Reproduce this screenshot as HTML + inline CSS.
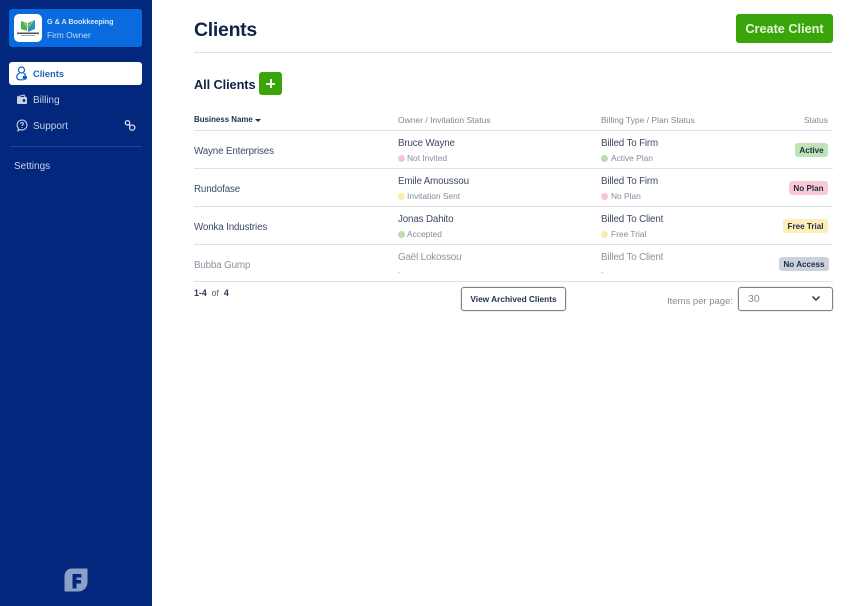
<!DOCTYPE html>
<html><head><meta charset="utf-8"><style>
html,body{margin:0;padding:0;background:#fff}
body{width:852px;height:606px;overflow:hidden;position:relative;font-family:"Liberation Sans",sans-serif;color:#3d4a66}
#w{position:absolute;left:0;top:0;width:852px;height:606px;filter:blur(.3px)}
.a{position:absolute;white-space:nowrap;line-height:14px}
.side{position:absolute;left:0;top:0;width:152px;height:606px;background:#02277c}
.hr{position:absolute;height:1px;background:#e0e2e5}
.p{font-size:9.8px;letter-spacing:-.15px;color:#3d4a66}
.s{font-size:8.4px;color:#858c9b}
.h{font-size:8.5px;color:#7f8695}
.d{position:absolute;width:7px;height:7px;border-radius:50%}
.b{position:absolute;height:14px;line-height:15px;border-radius:3px;font-size:8.1px;font-weight:bold;color:#1d2b4d;text-align:center}
.n{font-size:10px;color:#c9d3e8}
.o{position:absolute;border:1px solid #7b828f;box-shadow:0 0 1px #7b828f;border-radius:3px}
</style></head><body><div id="w">
<div class="side"></div>
<div style="position:absolute;left:9px;top:9px;width:133px;height:38px;background:#0a6bde;border-radius:3px"></div>
<div style="position:absolute;left:14px;top:14px;width:28px;height:28px;background:#fff;border-radius:5px"></div>
<svg style="position:absolute;left:14px;top:14px" width="28" height="28" viewBox="0 0 28 28"><path d="M7 7l6 2v8l-6-2z" fill="#4faf5a"/><path d="M14 9l7-3v9l-7 3z" fill="#2e8fc9"/><path d="M10 9l4 4 5-6" fill="none" stroke="#9ad04a" stroke-width="1.6"/><rect x="3" y="18.5" width="22" height="1.6" fill="#555"/><rect x="7" y="21" width="14" height="1" fill="#aaa"/></svg>
<div class="a" style="left:47px;top:15px;font-size:7.2px;font-weight:bold;color:#d5e5fb">G &amp; A Bookkeeping</div>
<div class="a" style="left:47px;top:28px;font-size:8.4px;color:#c5dcf8">Firm Owner</div>

<div style="position:absolute;left:9px;top:62px;width:133px;height:23px;background:#fff;border-radius:3px"></div>
<svg style="position:absolute;left:15px;top:66px" width="14" height="15" viewBox="0 0 14 15" fill="none" stroke="#0a5cc4" stroke-width="1.2"><circle cx="6.5" cy="4" r="3"/><path d="M4.500 7.200C2.500 8 1.800 9.500 1.800 11c0 1.800 1.200 2.800 3 2.800h3.600"/><path d="M8.500 7.200c1 .4 1.700 1 2.200 1.900"/><circle cx="9.800" cy="11.600" r="2.200" fill="#0a5cc4" stroke="none"/></svg>
<div class="a" style="left:33px;top:67px;font-size:9.3px;font-weight:bold;color:#1d63b8">Clients</div>

<svg style="position:absolute;left:16px;top:94px" width="12" height="11" viewBox="0 0 12 11" fill="none"><path d="M1 3l7-2 1 2" stroke="#c9d3e8" stroke-width="1.1"/><rect x="1" y="3" width="10" height="7" rx="1" fill="#c9d3e8"/><circle cx="8" cy="6.500" r="1.400" fill="#02277c"/></svg>
<div class="a n" style="left:33px;top:94px">Billing</div>

<svg style="position:absolute;left:16px;top:119px" width="12" height="13" viewBox="0 0 12 13" fill="none" stroke="#c9d3e8" stroke-width="1.1"><path d="M6 1a5 5 0 1 1-2.200 9.500L2 11.800l.4-2.500A5 5 0 0 1 6 1z"/><path d="M4.600 4.800c0-.8.6-1.300 1.400-1.300s1.400.5 1.400 1.200c0 1.100-1.400 1.100-1.400 2.200"/><path d="M6 8v.8"/></svg>
<div class="a n" style="left:33px;top:120px">Support</div>
<svg style="position:absolute;left:124px;top:119px" width="12" height="13" viewBox="0 0 12 13" fill="none" stroke="#d5dcec" stroke-width="1.3"><circle cx="3.500" cy="3.800" r="2.200"/><circle cx="8.200" cy="8.600" r="2.600"/><path d="M5 5.500l1.500 1.500"/></svg>
<div style="position:absolute;left:10px;top:146px;width:132px;height:1px;background:#1f4490"></div>
<div class="a n" style="left:14px;top:160px">Settings</div>

<svg style="position:absolute;left:64px;top:568px" width="24" height="24" viewBox="0 0 24 24"><path d="M8 .5h15.500V14c0 5.500-4 9.500-9.500 9.500H.5V8C.5 3.800 3.800.5 8 .5z" fill="#8ba0c9"/><path d="M8.500 6h9v3.500H12.500v2.500h4.500v3.500h-4.500v5h-4z" fill="#02277c"/></svg>

<div class="a" style="left:194px;top:18px;line-height:24px;font-size:19.5px;font-weight:bold;color:#10244a;letter-spacing:-.3px">Clients</div>
<div style="position:absolute;left:736px;top:14px;width:97px;height:29px;background:#3aa50a;border-radius:3px;color:#e6f5de;font-weight:bold;font-size:12.7px;line-height:30px;text-align:center">Create Client</div>
<div class="hr" style="left:194px;top:52px;width:639px"></div>

<div class="a" style="left:194px;top:76px;line-height:17px;font-size:12.8px;font-weight:bold;color:#10244a;letter-spacing:-.1px">All Clients</div>
<div style="position:absolute;left:259px;top:72px;width:23px;height:23px;background:#3aa50a;border-radius:3px"></div>
<div style="position:absolute;left:266px;top:82.500px;width:9px;height:2px;background:#eaf6e2"></div>
<div style="position:absolute;left:269.500px;top:79px;width:2px;height:9px;background:#eaf6e2"></div>

<div class="a" style="left:194px;top:113px;font-size:7.9px;font-weight:bold;color:#1d2f55">Business Name</div>
<div style="position:absolute;left:255px;top:119px;width:0;height:0;border:3px solid transparent;border-top:3px solid #1d2f55;border-bottom:0"></div>
<div class="a h" style="left:398px;top:113px">Owner / Invitation Status</div>
<div class="a h" style="left:601px;top:113px">Billing Type / Plan Status</div>
<div class="a h" style="right:24px;top:113px">Status</div>
<div class="hr" style="left:194px;top:130px;width:639px"></div>

<div class="a p" style="left:194px;top:145px">Wayne Enterprises</div>
<div class="a p" style="left:398px;top:137px">Bruce Wayne</div>
<div class="d" style="left:398px;top:155px;background:#f6c4d2"></div>
<div class="a s" style="left:407px;top:151px">Not Invited</div>
<div class="a p" style="left:601px;top:137px">Billed To Firm</div>
<div class="d" style="left:601px;top:155px;background:#bfdcab"></div>
<div class="a s" style="left:611px;top:151px">Active Plan</div>
<div class="b" style="left:795px;top:143px;width:33px;background:#bfe3b4">Active</div>
<div class="hr" style="left:194px;top:168px;width:639px"></div>

<div class="a p" style="left:194px;top:183px">Rundofase</div>
<div class="a p" style="left:398px;top:175px">Emile Amoussou</div>
<div class="d" style="left:398px;top:193px;background:#f8eeaa"></div>
<div class="a s" style="left:407px;top:189px">Invitation Sent</div>
<div class="a p" style="left:601px;top:175px">Billed To Firm</div>
<div class="d" style="left:601px;top:193px;background:#f6c4d2"></div>
<div class="a s" style="left:611px;top:189px">No Plan</div>
<div class="b" style="left:789px;top:181px;width:39px;background:#fbc9d4">No Plan</div>
<div class="hr" style="left:194px;top:206px;width:639px"></div>

<div class="a p" style="left:194px;top:221px">Wonka Industries</div>
<div class="a p" style="left:398px;top:213px">Jonas Dahito</div>
<div class="d" style="left:398px;top:231px;background:#bfdcab"></div>
<div class="a s" style="left:407px;top:227px">Accepted</div>
<div class="a p" style="left:601px;top:213px">Billed To Client</div>
<div class="d" style="left:601px;top:231px;background:#f8eeaa"></div>
<div class="a s" style="left:611px;top:227px">Free Trial</div>
<div class="b" style="left:783px;top:219px;width:45px;background:#fdeeb5">Free Trial</div>
<div class="hr" style="left:194px;top:244px;width:639px"></div>

<div class="a p" style="left:194px;top:259px;color:#8c92a0">Bubba Gump</div>
<div class="a p" style="left:398px;top:251px;color:#8c92a0">Gaël Lokossou</div>
<div class="a s" style="left:398px;top:265px;color:#a5aab5">-</div>
<div class="a p" style="left:601px;top:251px;color:#8c92a0">Billed To Client</div>
<div class="a s" style="left:601px;top:265px;color:#a5aab5">-</div>
<div class="b" style="left:779px;top:257px;width:50px;background:#ccd2dc">No Access</div>
<div class="hr" style="left:194px;top:281px;width:639px"></div>

<div class="a" style="left:194px;top:286px;font-size:8.800px;color:#5c6579"><b style="color:#2a3858">1-4</b>&nbsp; of &nbsp;<b style="color:#2a3858">4</b></div>
<div class="o" style="left:461px;top:287px;width:103px;height:22px;text-align:center;line-height:23px;font-size:8.300px;font-weight:bold;color:#243355">View Archived Clients</div>
<div class="a" style="left:667px;top:295px;font-size:9.500px;color:#858c9b">Items per page:</div>
<div class="o" style="left:738px;top:287px;width:93px;height:22px"></div>
<div class="a" style="left:748px;top:292px;font-size:10.500px;color:#858c9b">30</div>
<svg style="position:absolute;left:811px;top:295px" width="10" height="7" viewBox="0 0 10 7" fill="none" stroke="#3d4a66" stroke-width="1.600"><path d="M1.500 1.500L5 5l3.500-3.500"/></svg>
</div></body></html>
